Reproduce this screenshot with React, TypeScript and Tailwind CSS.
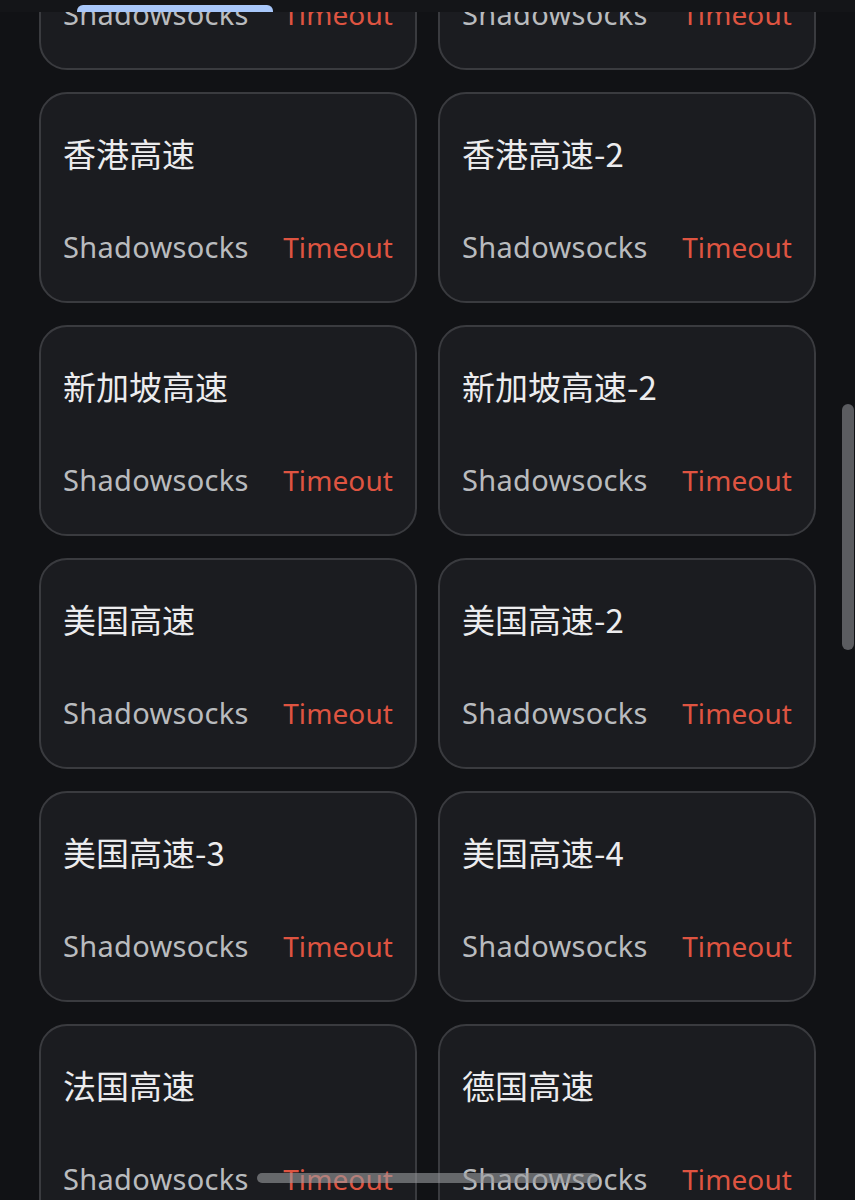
import React from 'react';

type Node = { name: string; type: string; status: string };

const nodes: Node[] = [
  { name: '台湾高速', type: 'Shadowsocks', status: 'Timeout' },
  { name: '台湾高速-2', type: 'Shadowsocks', status: 'Timeout' },
  { name: '香港高速', type: 'Shadowsocks', status: 'Timeout' },
  { name: '香港高速-2', type: 'Shadowsocks', status: 'Timeout' },
  { name: '新加坡高速', type: 'Shadowsocks', status: 'Timeout' },
  { name: '新加坡高速-2', type: 'Shadowsocks', status: 'Timeout' },
  { name: '美国高速', type: 'Shadowsocks', status: 'Timeout' },
  { name: '美国高速-2', type: 'Shadowsocks', status: 'Timeout' },
  { name: '美国高速-3', type: 'Shadowsocks', status: 'Timeout' },
  { name: '美国高速-4', type: 'Shadowsocks', status: 'Timeout' },
  { name: '法国高速', type: 'Shadowsocks', status: 'Timeout' },
  { name: '德国高速', type: 'Shadowsocks', status: 'Timeout' },
];

function ProxyCard({ node }: { node: Node }) {
  return (
    <div className="flex h-[211px] flex-col rounded-[28px] border-2 border-[#3a3b3f] bg-[#1b1c20]">
      <div className="px-[22px] pt-[37px] font-['Noto_Sans_CJK_SC',sans-serif] text-[33px] leading-[44px] text-[#ececee]">
        {node.name}
      </div>
      <div className="mt-auto flex items-center justify-between px-[22px] pb-[34px] text-[29px] leading-[40px] tracking-[0.3px]">
        <span className="text-[#b9bbbe]">{node.type}</span>
        <span className="text-[28px] tracking-[0.1px] text-[#de5441]">{node.status}</span>
      </div>
    </div>
  );
}

export default function App() {
  return (
    <div
      className="relative h-[1200px] w-[855px] overflow-hidden bg-[#111215]"
      style={{ fontFamily: '"Noto Sans", "Noto Sans CJK SC", sans-serif' }}
    >
      {/* scrolled list */}
      <div className="-mt-[141px] grid grid-cols-[378px_378px] gap-x-[21px] gap-y-[22px] pl-[39px]">
        {nodes.map((n) => (
          <ProxyCard key={n.name} node={n} />
        ))}
      </div>

      {/* header strip with tab indicator */}
      <div className="absolute left-0 right-0 top-0 h-[12px] bg-[#141518]">
        <div className="absolute bottom-0 left-[77px] h-[7px] w-[196px] rounded-t-[6px] bg-[#a8c7fa]" />
      </div>

      {/* scrollbar */}
      <div className="absolute right-[1px] top-[404px] h-[246px] w-[12px] rounded-full bg-[#5b5c60]" />

      {/* gesture bar */}
      <div className="absolute left-[257px] top-[1173px] h-[10px] w-[341px] rounded-full bg-[#9a9b9e]/60" />
    </div>
  );
}
